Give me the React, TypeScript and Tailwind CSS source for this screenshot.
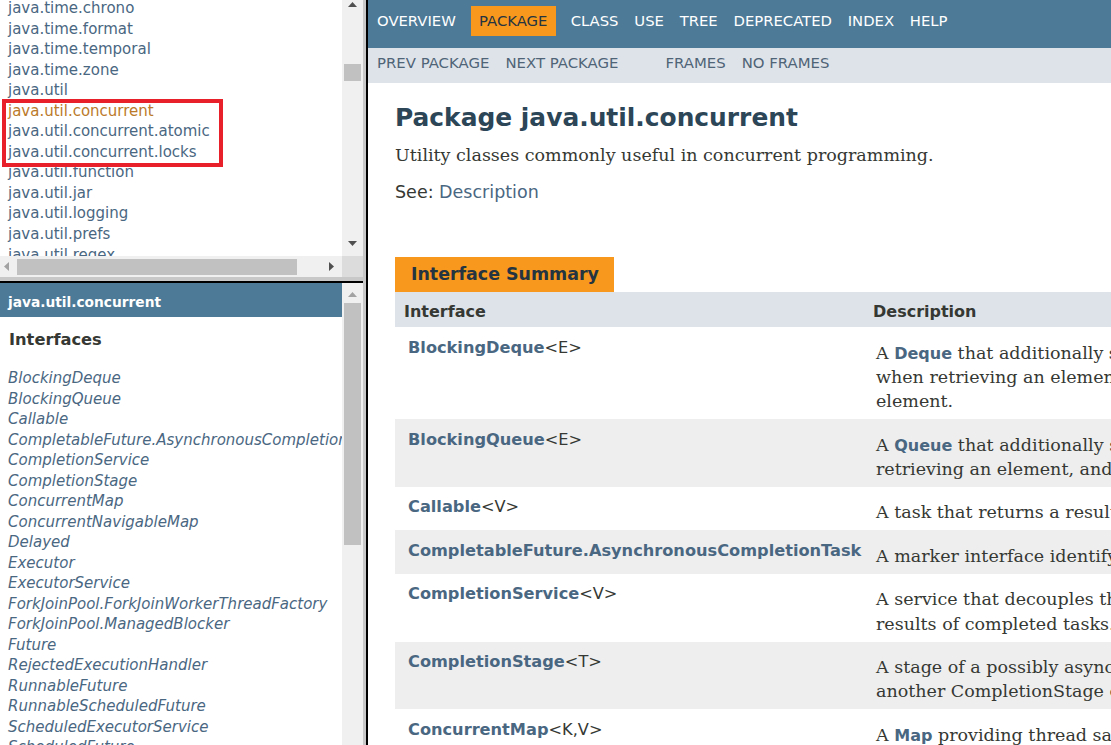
import React from "react";

const topPackages = [
  "java.time.chrono",
  "java.time.format",
  "java.time.temporal",
  "java.time.zone",
  "java.util",
  "java.util.concurrent",
  "java.util.concurrent.atomic",
  "java.util.concurrent.locks",
  "java.util.function",
  "java.util.jar",
  "java.util.logging",
  "java.util.prefs",
  "java.util.regex",
  "java.util.spi",
];

const interfaces = [
  "BlockingDeque",
  "BlockingQueue",
  "Callable",
  "CompletableFuture.AsynchronousCompletionTask",
  "CompletionService",
  "CompletionStage",
  "ConcurrentMap",
  "ConcurrentNavigableMap",
  "Delayed",
  "Executor",
  "ExecutorService",
  "ForkJoinPool.ForkJoinWorkerThreadFactory",
  "ForkJoinPool.ManagedBlocker",
  "Future",
  "RejectedExecutionHandler",
  "RunnableFuture",
  "RunnableScheduledFuture",
  "ScheduledExecutorService",
  "ScheduledFuture",
  "ThreadFactory",
];

function Tri({ dir, color }: { dir: "up" | "down" | "left" | "right"; color: string }) {
  if (dir === "up")
    return (
      <svg width="9" height="5" viewBox="0 0 9 5">
        <polygon points="0,5 4.5,0 9,5" fill={color} />
      </svg>
    );
  if (dir === "down")
    return (
      <svg width="9" height="5" viewBox="0 0 9 5">
        <polygon points="0,0 9,0 4.5,5" fill={color} />
      </svg>
    );
  if (dir === "left")
    return (
      <svg width="5" height="9" viewBox="0 0 5 9">
        <polygon points="5,0 5,9 0,4.5" fill={color} />
      </svg>
    );
  return (
    <svg width="5" height="9" viewBox="0 0 5 9">
      <polygon points="0,0 5,4.5 0,9" fill={color} />
    </svg>
  );
}

const Code = ({ children }: { children: React.ReactNode }) => (
  <span className="font-['DejaVu_Sans',sans-serif] font-bold text-[16px] leading-[0] text-[#4a6782]">{children}</span>
);

type Row = { name: string; tp: string; desc: React.ReactNode[] };

const rows: Row[] = [
  {
    name: "BlockingDeque",
    tp: "<E>",
    desc: [
      <>
        A <Code>Deque</Code> that additionally supports blocking operations that wait for the deque to become non-empty
      </>,
      "when retrieving an element, and wait for space to become available in the deque when storing an",
      "element.",
    ],
  },
  {
    name: "BlockingQueue",
    tp: "<E>",
    desc: [
      <>
        A <Code>Queue</Code> that additionally supports operations that wait for the queue to become non-empty when
      </>,
      "retrieving an element, and wait for space to become available in the queue when storing an element.",
    ],
  },
  {
    name: "Callable",
    tp: "<V>",
    desc: ["A task that returns a result and may throw an exception."],
  },
  {
    name: "CompletableFuture.AsynchronousCompletionTask",
    tp: "",
    desc: ["A marker interface identifying asynchronous tasks produced by async methods."],
  },
  {
    name: "CompletionService",
    tp: "<V>",
    desc: [
      "A service that decouples the production of new asynchronous tasks from the consumption of the",
      "results of completed tasks.",
    ],
  },
  {
    name: "CompletionStage",
    tp: "<T>",
    desc: [
      "A stage of a possibly asynchronous computation, that performs an action or computes a value when",
      "another CompletionStage completes.",
    ],
  },
  {
    name: "ConcurrentMap",
    tp: "<K,V>",
    desc: [
      <>
        A <Code>Map</Code> providing thread safety and atomicity guarantees.
      </>,
    ],
  },
  {
    name: "ConcurrentNavigableMap",
    tp: "<K,V>",
    desc: ["A ConcurrentMap supporting NavigableMap operations, and recursively so for its navigable sub-maps."],
  },
];

export default function App() {
  return (
    <div className="w-[1111px] h-[745px] overflow-hidden flex bg-white font-['DejaVu_Sans',sans-serif] text-[#353833]">
      {/* LEFT COLUMN */}
      <div className="w-[368px] shrink-0 flex">
        <div className="w-[363px] flex flex-col">
          {/* top frame */}
          <div className="h-[277px] flex flex-col relative">
            <div className="h-[256px] flex">
              <div className="w-[342px] overflow-hidden">
                <ul className="mt-[-2px] pl-[8px] text-[15px] leading-[20.55px] text-[#4a6782] whitespace-nowrap">
                  {topPackages.map((p) => (
                    <li key={p} className={p === "java.util.concurrent" ? "text-[#bb7a2a]" : ""}>
                      {p}
                    </li>
                  ))}
                </ul>
              </div>
              <div className="w-[21px] bg-[#f0f0f0] flex flex-col items-center">
                <div className="mt-[2px] flex">
                  <Tri dir="up" color="#505050" />
                </div>
                <div className="mt-[57px] w-[17px] h-[17px] bg-[#c1c1c1]" />
                <div className="flex-1" />
                <div className="mb-[10px] flex">
                  <Tri dir="down" color="#505050" />
                </div>
              </div>
            </div>
            <div className="h-[21px] flex">
              <div className="w-[342px] bg-[#f0f0f0] flex items-center">
                <div className="ml-[4px] flex">
                  <Tri dir="left" color="#a3a3a3" />
                </div>
                <div className="ml-[8px] w-[280px] h-[16px] bg-[#c1c1c1]" />
                <div className="ml-[32px] flex">
                  <Tri dir="right" color="#505050" />
                </div>
              </div>
              <div className="w-[21px] bg-[#dcdcdc]" />
            </div>
            {/* red annotation box */}
            <div className="absolute left-[2px] top-[99px] w-[221px] h-[68px] border-[4px] border-[#e8202a]" />
          </div>
          <div className="h-[4px] bg-[#c8c8c8]" />
          <div className="h-[2px] bg-black" />
          {/* lower frame */}
          <div className="flex-1 flex min-h-0">
            <div className="w-[342px] overflow-hidden">
              <div className="h-[34px] bg-[#4d7a97] pt-[4px] pl-[8px] text-white font-bold text-[13.75px] leading-[30px] whitespace-nowrap">
                java.util.concurrent
              </div>
              <div className="mt-[13px] pl-[9px] font-bold text-[16.25px] leading-[20px] text-[#353833]">
                Interfaces
              </div>
              <ul className="mt-[18px] pl-[8px] italic text-[15px] leading-[20.5px] text-[#4a6782] whitespace-nowrap">
                {interfaces.map((i) => (
                  <li key={i}>{i}</li>
                ))}
              </ul>
            </div>
            <div className="w-[21px] bg-[#f0f0f0] flex flex-col items-center">
              <div className="mt-[9px] flex">
                <Tri dir="up" color="#a3a3a3" />
              </div>
              <div className="mt-[6px] w-[17px] h-[242px] bg-[#c1c1c1]" />
            </div>
          </div>
        </div>
        <div className="w-[3px] bg-[#c8c8c8]" />
        <div className="w-[2px] bg-black" />
      </div>

      {/* RIGHT FRAME */}
      <div className="flex-1 min-w-0 overflow-hidden">
        <div className="w-[1500px]">
          {/* top nav */}
          <div className="h-[48px] bg-[#4d7a97] pt-[6px] pl-[9px]">
            <ul className="flex gap-[15.8px] text-[14.8px] leading-[30px] text-white uppercase whitespace-nowrap">
              <li>Overview</li>
              <li className="bg-[#f8981d] text-[#253441] px-[8.5px] -mx-[1px]">Package</li>
              <li>Class</li>
              <li>Use</li>
              <li>Tree</li>
              <li>Deprecated</li>
              <li>Index</li>
              <li>Help</li>
            </ul>
          </div>
          {/* sub nav */}
          <div className="h-[35px] bg-[#dee3e9] pl-[9px]">
            <ul className="flex gap-[16px] text-[14.9px] leading-[31px] text-[#4f6477] uppercase whitespace-nowrap">
              <li>Prev Package</li>
              <li>Next Package</li>
              <li className="ml-[31px]">Frames</li>
              <li>No Frames</li>
            </ul>
          </div>
          {/* content */}
          <div className="pl-[27px]">
            <h1 className="mt-[20px] text-[24.9px] leading-[29px] font-bold text-[#2c4557] whitespace-nowrap">
              Package java.util.concurrent
            </h1>
            <div className="mt-[11px] font-['DejaVu_Serif',serif] text-[17.5px] leading-[24px] text-[#353833] whitespace-nowrap">
              Utility classes commonly useful in concurrent programming.
            </div>
            <div className="mt-[13px] text-[17.5px] leading-[24px] text-[#353833] whitespace-nowrap">
              See: <span className="text-[#4a6782]">Description</span>
            </div>

            {/* summary table */}
            <div className="mt-[53px]">
              <div className="flex">
                <div className="h-[35px] bg-[#f8981d] pl-[16px] pr-[15px] font-bold text-[17.4px] leading-[35px] text-[#253441] whitespace-nowrap">
                  Interface Summary
                </div>
              </div>
              <div className="grid grid-cols-[471px_1fr]">
                <div className="h-[35px] bg-[#dee3e9] pt-[4px] pl-[9px] font-bold text-[16px] leading-[31px] text-[#353833]">
                  Interface
                </div>
                <div className="h-[35px] bg-[#dee3e9] pt-[4px] pl-[7px] font-bold text-[16px] leading-[31px] text-[#353833]">
                  Description
                </div>
                {rows.map((r, idx) => {
                  const bg = idx % 2 === 0 ? "bg-white" : "bg-[#eeeeef]";
                  return (
                    <React.Fragment key={r.name}>
                      <div className={`${bg} pt-[12.5px] pl-[13px] text-[16.2px] leading-[16px] whitespace-nowrap`}>
                        <span className="font-bold text-[#4a6782]">{r.name}</span>
                        <span className="text-[#353833]">{r.tp}</span>
                      </div>
                      <div
                        className={`${bg} pt-[13.5px] pb-[5.75px] pl-[10px] font-['DejaVu_Serif',serif] text-[17.5px] leading-[24px] text-[#353833] whitespace-nowrap`}
                      >
                        {r.desc.map((d, j) => (
                          <div key={j} className="h-[24.25px]">
                            {d}
                          </div>
                        ))}
                      </div>
                    </React.Fragment>
                  );
                })}
              </div>
            </div>
          </div>
        </div>
      </div>
    </div>
  );
}
